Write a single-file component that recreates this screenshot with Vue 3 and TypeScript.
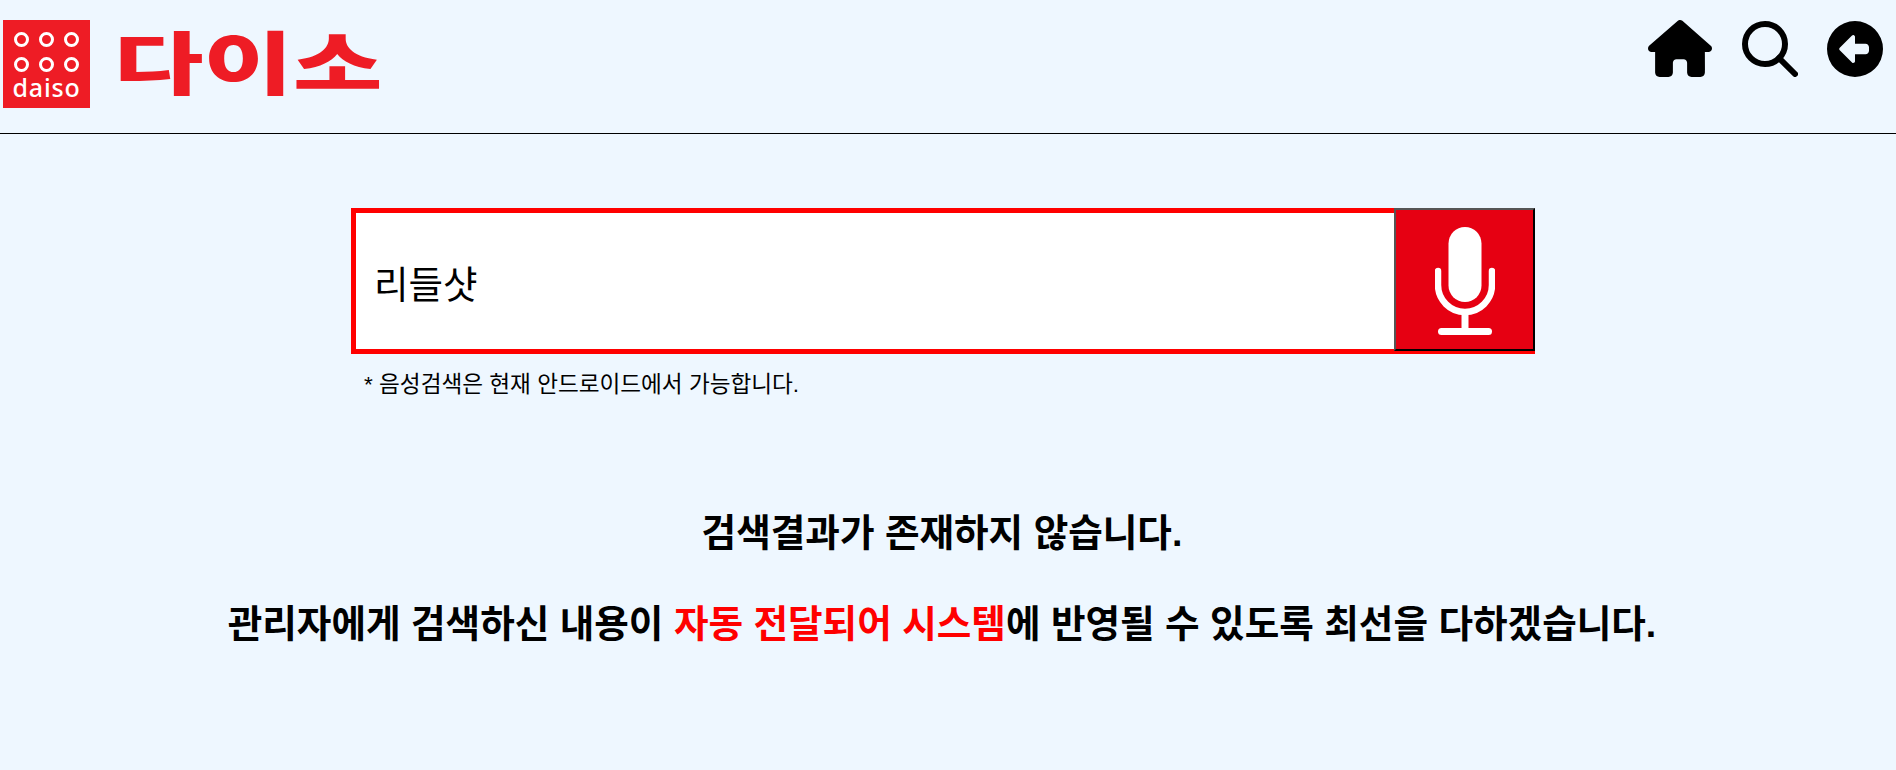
<script setup lang="ts">
const query: string = '리들샷'
</script>

<template>
  <div class="page">
    <header class="top">
      <div class="brand">
        <div class="tile">
          <div class="dots">
            <i v-for="n in 6" :key="n" class="dot"></i>
          </div>
          <span class="tile-name">daiso</span>
        </div>
        <span class="wordmark">다이소</span>
      </div>
      <nav class="tools">
        <svg class="ic-home" viewBox="0 0 576 512" aria-label="home">
          <path d="M575.8 255.5c0 18-15 32.1-32 32.1h-32l.7 160.2c0 2.7-.2 5.4-.5 8.1V472c0 22.1-17.9 40-40 40H456c-1.1 0-2.2 0-3.3-.1c-1.4 .1-2.8 .1-4.2 .1H416 392c-22.1 0-40-17.9-40-40V448 384c0-17.7-14.3-32-32-32H256c-17.7 0-32 14.3-32 32v64 24c0 22.1-17.9 40-40 40H160 128.1c-1.5 0-3-.1-4.5-.2c-1.2 .1-2.4 .2-3.6 .2H104c-22.1 0-40-17.9-40-40V360c0-.9 0-1.9 .1-2.8V287.6H32c-18 0-32-14-32-32.1c0-9 3-17 10-24L266.4 8c7-7 15-8 22-8s15 2 21 7L564.8 231.5c8 7 12 15 11 24z"/>
        </svg>
        <svg class="ic-search" viewBox="0 0 56 56" aria-label="search">
          <circle cx="23" cy="23" r="20" fill="none" stroke="#000" stroke-width="6"/>
          <path d="M37 37 L53 53" fill="none" stroke="#000" stroke-width="6" stroke-linecap="round"/>
        </svg>
        <svg class="ic-back" viewBox="0 0 512 512" aria-label="back">
          <path d="M512 256A256 256 0 1 0 0 256a256 256 0 1 0 512 0zM116.7 244.7l112-112c4.6-4.6 11.5-5.9 17.4-3.5s9.9 8.3 9.9 14.8l0 64 96 0c17.7 0 32 14.3 32 32l0 32c0 17.7-14.3 32-32 32l-96 0 0 64c0 6.5-3.9 12.3-9.9 14.8s-12.8 1.1-17.4-3.5l-112-112c-6.2-6.2-6.2-16.4 0-22.6z"/>
        </svg>
      </nav>
    </header>

    <main class="body">
      <div class="search">
        <div class="field">
          <div class="input">{{ query }}</div>
          <button class="mic" type="button" aria-label="voice search">
            <svg viewBox="0 0 60 108" width="60" height="108">
              <rect x="13.5" y="0" width="33" height="75" rx="16.5" fill="#fff"/>
              <path d="M3 44v14a27 27 0 0 0 54 0v-14" fill="none" stroke="#fff" stroke-width="6.5" stroke-linecap="round"/>
              <path d="M30 85v19" fill="none" stroke="#fff" stroke-width="7"/>
              <path d="M6.5 104.5h47" fill="none" stroke="#fff" stroke-width="7" stroke-linecap="round"/>
            </svg>
          </button>
        </div>
        <p class="note">* 음성검색은 현재 안드로이드에서 가능합니다.</p>
      </div>

      <section class="result">
        <h2>검색결과가 존재하지 않습니다.</h2>
        <h2>관리자에게 검색하신 내용이 <span class="hl">자동 전달되어 시스템</span>에 반영될 수 있도록 최선을 다하겠습니다.</h2>
      </section>
    </main>
  </div>
</template>

<style>
html, body { margin: 0; background: #eef7ff; }
</style>

<style scoped>
.page {
  min-height: 770px;
  background: #eef7ff;
  font-family: "Liberation Sans", "Noto Sans CJK KR", sans-serif;
  color: #000;
}
.top {
  height: 133px;
  border-bottom: 1px solid #000;
  display: flex;
  justify-content: space-between;
  align-items: flex-start;
}
.brand {
  display: flex;
  align-items: center;
  gap: 24px;
  margin: 20px 0 0 3px;
}
.tile {
  width: 87px;
  height: 88px;
  background: #ee1c25;
  display: flex;
  flex-direction: column;
  align-items: center;
  padding-top: 12px;
  box-sizing: border-box;
}
.dots {
  display: grid;
  grid-template-columns: repeat(3, 15px);
  gap: 10px;
}
.dot {
  width: 15px;
  height: 15px;
  border: 3.5px solid #fff;
  border-radius: 50%;
  box-sizing: border-box;
}
.tile-name {
  color: #fff;
  font: 500 25px/22px "Noto Sans", sans-serif;
  letter-spacing: 0.8px;
  margin-top: 4px;
}
.wordmark {
  color: #ee1c25;
  font: 900 68px/88px "Noto Sans CJK KR", sans-serif;
  transform: translateY(-4px) scaleX(1.43);
  transform-origin: left center;
}
.tools {
  display: flex;
  align-items: center;
  gap: 29px;
  margin: 20px 13px 0 0;
}
.ic-home { width: 64px; height: 57px; margin-right: 1px; }
.ic-search { width: 56px; height: 56px; }
.ic-back { width: 56px; height: 56px; }
.body {
  display: flex;
  flex-direction: column;
  align-items: center;
}
.search {
  width: 1184px;
  margin-top: 74px;
  margin-right: 10px;
}
.field {
  display: flex;
  height: 146px;
  border: 5px solid #f00;
  box-sizing: border-box;
  background: #fff;
}
.input {
  flex: 1;
  display: flex;
  align-items: center;
  padding-left: 18px;
  font-size: 37.5px;
}
.mic {
  width: 141px;
  margin: -5px -5px -2px 0;
  padding: 2px 0 0;
  border: 2px solid;
  border-color: #555 #000 #000 #555;
  background: #e60012;
  display: flex;
  align-items: center;
  justify-content: center;
}
.note {
  margin: 17px 0 0 13px;
  font-size: 22.6px;
  line-height: 28px;
}
.result {
  box-sizing: border-box;
  width: 100%;
  padding-right: 12px;
  text-align: center;
  margin-top: 107px;
}
.result h2 {
  margin: 0 0 37px;
  font-size: 37.6px;
  line-height: 54px;
  font-weight: 700;
}
.hl { color: #f00; }
</style>
